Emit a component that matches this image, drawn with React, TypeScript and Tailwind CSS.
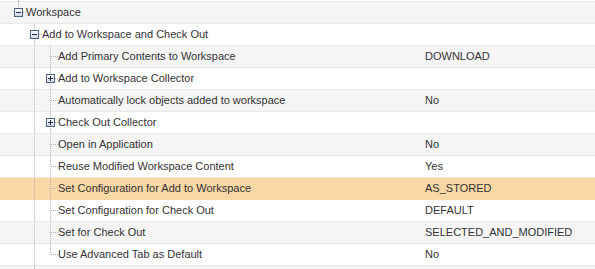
import React from "react";

type Row = {
  label: string;
  value?: string;
  level: number;
  icon?: "plus" | "minus";
  last?: boolean;
  guides: number[];
  selected?: boolean;
};

const rows: Row[] = [
  { label: "Workspace", level: 0, icon: "minus", last: true, guides: [] },
  { label: "Add to Workspace and Check Out", level: 1, icon: "minus", guides: [] },
  { label: "Add Primary Contents to Workspace", value: "DOWNLOAD", level: 2, guides: [1] },
  { label: "Add to Workspace Collector", level: 2, icon: "plus", guides: [1] },
  { label: "Automatically lock objects added to workspace", value: "No", level: 2, guides: [1] },
  { label: "Check Out Collector", level: 2, icon: "plus", guides: [1] },
  { label: "Open in Application", value: "No", level: 2, guides: [1] },
  { label: "Reuse Modified Workspace Content", value: "Yes", level: 2, guides: [1] },
  { label: "Set Configuration for Add to Workspace", value: "AS_STORED", level: 2, guides: [1], selected: true },
  { label: "Set Configuration for Check Out", value: "DEFAULT", level: 2, guides: [1] },
  { label: "Set for Check Out", value: "SELECTED_AND_MODIFIED", level: 2, guides: [1] },
  { label: "Use Advanced Tab as Default", value: "No", level: 2, last: true, guides: [1] },
];

const dot = "#b4b4b4";

const Guide = () => (
  <svg width="16" height="21" className="shrink-0 block">
    <line x1="8.5" y1="0" x2="8.5" y2="21" stroke={dot} strokeDasharray="1 1" />
  </svg>
);

const Elbow = ({ icon, last }: { icon?: "plus" | "minus"; last?: boolean }) => (
  <svg width="16" height="21" className="shrink-0 block">
    <defs>
      <linearGradient id="box" x1="0" y1="0" x2="0" y2="1">
        <stop offset="0" stopColor="#ffffff" />
        <stop offset="1" stopColor="#cdd6e2" />
      </linearGradient>
    </defs>
    <line x1="8.5" y1="0" x2="8.5" y2={last ? 11 : 21} stroke={dot} strokeDasharray="1 1" />
    <line x1="9" y1="10.5" x2="16" y2="10.5" stroke={dot} strokeDasharray="1 1" />
    {icon && (
      <g>
        <rect x="4.5" y="6.5" width="8" height="8" fill="url(#box)" stroke="#4f6283" />
        <line x1="6" y1="10.5" x2="11" y2="10.5" stroke="#1e2f4d" />
        {icon === "plus" && <line x1="8.5" y1="8" x2="8.5" y2="13" stroke="#1e2f4d" />}
      </g>
    )}
  </svg>
);

export default function App() {
  return (
    <div
      className="w-[595px] h-[269px] overflow-hidden bg-white text-[11px] text-[#333]"
      style={{ fontFamily: '"Liberation Sans", Arial, sans-serif' }}
    >
      <div className="h-[2px] border-b border-[#e9e9e9] relative">
        <span className="absolute left-[18px] top-0 h-[2px] border-l border-dotted border-[#b4b4b4]" />
      </div>
      {rows.map((r, i) => (
        <div
          key={i}
          className={`flex h-[22px] border-b ${
            r.selected
              ? "bg-[#f9d8a6] border-[#f9d8a6]"
              : i % 2 === 0
              ? "bg-[#f5f5f5] border-[#e9e9e9]"
              : "bg-white border-[#e9e9e9]"
          }`}
        >
          <div className="w-[420px] flex items-center pl-[10px]">
            {Array.from({ length: r.level }).map((_, l) =>
              r.guides.includes(l) ? <Guide key={l} /> : <div key={l} className="w-4 shrink-0" />
            )}
            <Elbow icon={r.icon} last={r.last} />
            <span className="whitespace-nowrap leading-[21px]">{r.label}</span>
          </div>
          <div className="flex-1 pl-[5px] leading-[21px] whitespace-nowrap">{r.value}</div>
        </div>
      ))}
      <div className="flex h-[22px] bg-[#f5f5f5] pl-[10px]">
        <div className="w-4 shrink-0" />
        <Guide />
      </div>
    </div>
  );
}
